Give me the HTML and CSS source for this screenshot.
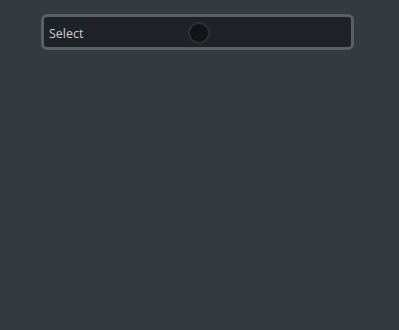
FILE: index.html
```html
<!DOCTYPE html>
<html>
<head>
<meta charset="utf-8">
<link rel="stylesheet" href="styles.css">
</head>
<body>
<div class="page">
  <div class="select">
    <span class="label">Select</span>
    <span class="knob"></span>
  </div>
</div>
</body>
</html>
```
FILE: styles.css
```css
html, body {
  margin: 0;
  padding: 0;
  background: #353a40;
  height: 100%;
}
.page {
  padding: 14px 0 0 41px;
}
.select {
  position: relative;
  box-sizing: border-box;
  width: 313px;
  height: 36px;
  border: 3px solid #5a5f65;
  border-radius: 6px;
  background: #1f2226;
  display: flex;
  align-items: center;
  padding-left: 5px;
  font-family: "Open Sans", "Noto Sans", sans-serif;
  font-size: 12.5px;
  color: #c9cdd2;
}
.label {
  line-height: 1;
  margin-top: 5px;
}
.knob {
  position: absolute;
  left: 144px;
  top: 5px;
  width: 22px;
  height: 22px;
  box-sizing: border-box;
  border-radius: 50%;
  border: 2px solid #2c3034;
  background: #121315;
}
```
